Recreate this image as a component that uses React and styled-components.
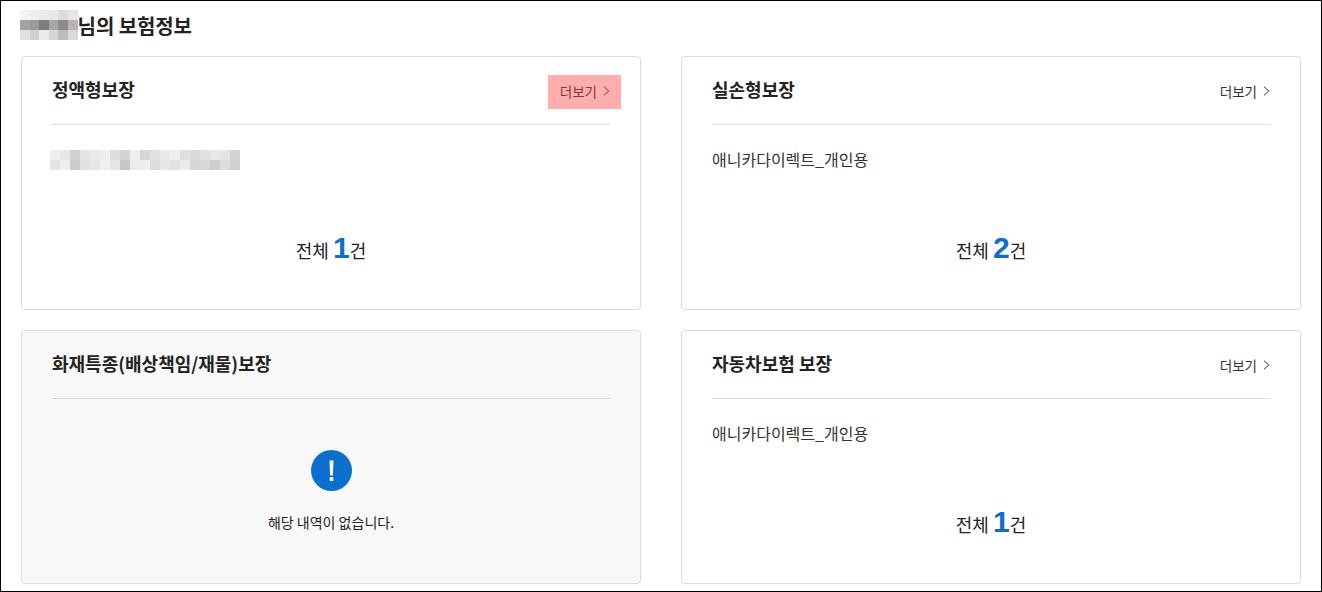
import React from "react";
import styled, { createGlobalStyle } from "styled-components";

const GlobalStyle = createGlobalStyle`
  html, body {
    margin: 0;
    padding: 0;
    background: #fff;
  }
  body {
    font-family: "Noto Sans CJK KR", "Noto Sans", sans-serif;
    color: #222;
  }
`;

const blurTitle = [
  ["#f4f3f3", "#efefef", "#ebebeb", "#e6e6e6", "#dcdcdc", "#e6e6e6"],
  ["#a3a3a3", "#9b9b9b", "#7f7c7c", "#a6a6a6", "#8a8a8a", "#b5b5b5"],
  ["#e0e0e0", "#cfcfcf", "#eaeaea", "#d6d6d6", "#bdbdbd", "#d9d9d9"],
];

const blurName = [
  ["#eeeeee", "#e6e6e6", "#d0d0d0", "#e4e4e4", "#e8e8e8", "#eeeeee", "#dddddd", "#d4d4d4", "#eeeeee", "#d6d6d6", "#e0e0e0", "#ebe9e8", "#f0eeee", "#dfdfe2", "#dadade", "#e0e0e2", "#e8e8e8", "#e2e2e4", "#d2d2d4"],
  ["#e4e4e4", "#eeeeee", "#cccccc", "#e0e0e0", "#e6e6e6", "#f0f0f0", "#e6e6e6", "#c8c8c8", "#ececec", "#eeeeee", "#dcdcdc", "#e8e6e6", "#e4e2e2", "#ecebeb", "#d6d6da", "#d8d8dc", "#cecece", "#dcdcdc", "#d0d0d2"],
];

const Mosaic = ({ rows, cellW, cellH }) => (
  <svg
    width={rows[0].length * cellW}
    height={rows.length * cellH}
    shapeRendering="crispEdges"
    style={{ display: "block", flexShrink: 0 }}
  >
    {rows.map((row, y) =>
      row.map((fill, x) => (
        <rect key={`${x}-${y}`} x={x * cellW} y={y * cellH} width={cellW} height={cellH} fill={fill} />
      ))
    )}
  </svg>
);

const Chevron = () => (
  <svg width="7" height="10" viewBox="0 0 7 10" fill="none">
    <path d="M1 .7 5.8 5 1 9.3" stroke="currentColor" strokeWidth="1" />
  </svg>
);

const AlertIcon = () => (
  <svg width="41" height="41" viewBox="0 0 41 41">
    <circle cx="20.5" cy="20.5" r="20.5" fill="#0b6fd0" />
    <path d="M18.5 10.5h4l-.6 15h-2.8z" fill="#fff" />
    <rect x="18.7" y="27.3" width="3.6" height="3.7" fill="#fff" />
  </svg>
);

const App = () => (
  <Frame>
    <GlobalStyle />
    <PageTitle>
      <Mosaic rows={blurTitle} cellW={9.6} cellH={10} />
      <span>님의 보험정보</span>
    </PageTitle>
    <CardGrid>
      <Card>
        <CardHeader>
          <CardTitle>정액형보장</CardTitle>
          <MoreLink $highlight>
            더보기 <Chevron />
          </MoreLink>
        </CardHeader>
        <CardBody>
          <BlurredName>
            <Mosaic rows={blurName} cellW={10} cellH={10} />
          </BlurredName>
          <Total>
            전체 <Count>1</Count>건
          </Total>
        </CardBody>
      </Card>
      <Card>
        <CardHeader>
          <CardTitle>실손형보장</CardTitle>
          <MoreLink>
            더보기 <Chevron />
          </MoreLink>
        </CardHeader>
        <CardBody>
          <ProductName>애니카다이렉트_개인용</ProductName>
          <Total>
            전체 <Count>2</Count>건
          </Total>
        </CardBody>
      </Card>
      <Card $empty>
        <CardHeader>
          <CardTitle>화재특종(배상책임/재물)보장</CardTitle>
        </CardHeader>
        <EmptyBody>
          <AlertIcon />
          <EmptyText>해당 내역이 없습니다.</EmptyText>
        </EmptyBody>
      </Card>
      <Card>
        <CardHeader>
          <CardTitle>자동차보험 보장</CardTitle>
          <MoreLink>
            더보기 <Chevron />
          </MoreLink>
        </CardHeader>
        <CardBody>
          <ProductName>애니카다이렉트_개인용</ProductName>
          <Total>
            전체 <Count>1</Count>건
          </Total>
        </CardBody>
      </Card>
    </CardGrid>
  </Frame>
);

const Frame = styled.div`
  box-sizing: border-box;
  width: 1322px;
  height: 592px;
  border: 1px solid #000;
  padding: 0 20px;
  overflow: hidden;
`;

const PageTitle = styled.h1`
  box-sizing: border-box;
  display: flex;
  align-items: flex-start;
  height: 55px;
  margin: 0 0 0 -1px;
  padding-top: 9px;
  font-size: 20px;
  line-height: 30px;
  font-weight: 700;
  color: #222;
  letter-spacing: -0.1px;

  span {
    margin-top: 1px;
  }
`;

const CardGrid = styled.div`
  display: grid;
  grid-template-columns: 620px 620px;
  grid-auto-rows: 254px;
  column-gap: 40px;
  row-gap: 20px;
`;

const Card = styled.section`
  box-sizing: border-box;
  display: flex;
  flex-direction: column;
  padding: 0 30px;
  border: 1px solid #dcdcdc;
  border-radius: 4px;
  background: ${({ $empty }) => ($empty ? "#f8f8f8" : "#fff")};
`;

const CardHeader = styled.div`
  box-sizing: border-box;
  display: flex;
  justify-content: space-between;
  align-items: flex-start;
  height: 68px;
  padding-top: 18px;
  flex-shrink: 0;
  border-bottom: 1px solid #dcdcdc;
`;

const CardTitle = styled.h2`
  margin: 1px 0 0;
  font-size: 18px;
  line-height: 26px;
  font-weight: 700;
  color: #222;
`;

const MoreLink = styled.a`
  display: flex;
  align-items: center;
  gap: 6px;
  box-sizing: border-box;
  height: 34px;
  margin-right: -11px;
  padding: 0 11px 2px 12px;
  font-size: 13.5px;
  color: ${({ $highlight }) => ($highlight ? "#7a3a3a" : "#333")};
  background: ${({ $highlight }) => ($highlight ? "#ffadad" : "transparent")};
`;

const CardBody = styled.div`
  flex: 1;
  display: flex;
  flex-direction: column;
`;

const ProductName = styled.p`
  margin: 23px 0 0;
  height: 22px;
  font-size: 16px;
  line-height: 22px;
  color: #333;
`;

const BlurredName = styled.div`
  margin: 25px 0 0 -2px;
  height: 20px;
`;

const Total = styled.p`
  margin: 60px 0 0;
  height: 36px;
  font-size: 18px;
  line-height: 36px;
  text-align: center;
  color: #222;
`;

const Count = styled.strong`
  font-family: "Liberation Sans", sans-serif;
  font-size: 30px;
  font-weight: 700;
  color: #0b6fd0;
`;

const EmptyBody = styled.div`
  flex: 1;
  display: flex;
  flex-direction: column;
  align-items: center;
  padding-top: 51px;
`;

const EmptyText = styled.p`
  margin: 21px 0 0;
  font-size: 14px;
  line-height: 20px;
  color: #222;
`;

export default App;
